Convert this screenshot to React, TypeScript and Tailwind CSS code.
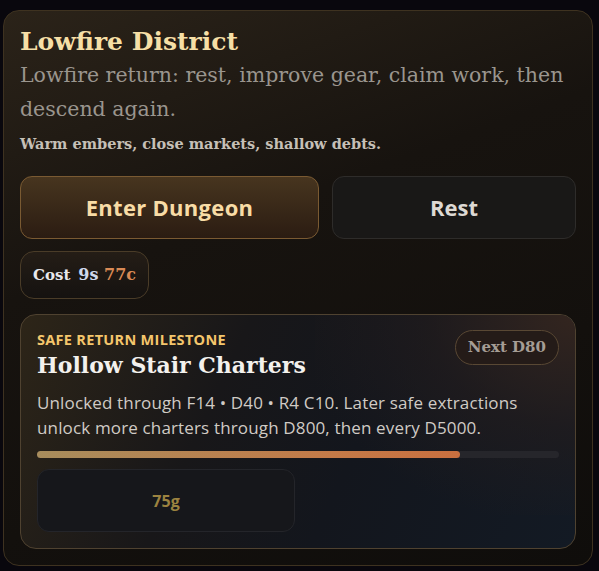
export default function App() {
  return (
    <div className="min-h-[571px] bg-[#09070d] pt-[10px] pl-[3px] pr-[6px] pb-[6px]">
      <div className="rounded-[16px] border border-[#3e3220] bg-[linear-gradient(160deg,#2b2319_0%,#17130f_38%,#0f0d0b_100%)] px-[16px] pt-[16px] pb-[16px]">
        <h1 className="font-['Georgia','DejaVu_Serif',serif] text-[25px] font-bold leading-[30px] text-[#f6dfa6]">
          Lowfire District
        </h1>
        <p className="mt-[1px] font-['Georgia','DejaVu_Serif',serif] text-[20.5px] leading-[34px] text-[#9a958e]">
          Lowfire return: rest, improve gear, claim work, then descend again.
        </p>
        <p className="mt-[8px] font-['Georgia','DejaVu_Serif',serif] text-[14.5px] font-bold leading-[20px] text-[#c6c0b7]">
          Warm embers, close markets, shallow debts.
        </p>

        <div className="mt-[22px] flex gap-[13px]">
          <button className="h-[63px] w-[299px] rounded-[12px] border border-[#7a5a32] bg-[linear-gradient(180deg,#47351f_0%,#2b1c12_100%)] font-['Segoe_UI','Open_Sans',sans-serif] text-[22px] font-bold tracking-[0.3px] text-[#f8dca6]">
            Enter Dungeon
          </button>
          <button className="h-[63px] flex-1 rounded-[12px] border border-[#2e2c2a] bg-[#191817] font-['Segoe_UI','Open_Sans',sans-serif] text-[22px] font-bold text-[#ddd9d3]">
            Rest
          </button>
        </div>

        <div className="mt-[12px] inline-flex h-[48px] items-center gap-[8px] rounded-[14px] border border-[#4a3c28] bg-[linear-gradient(180deg,#241d16_0%,#151210_100%)] px-[12px] font-['Georgia','DejaVu_Serif',serif] font-bold">
          <span className="text-[15px] text-[#e8e8ec]">Cost</span>
          <span className="text-[16px]">
            <span className="text-[#cfd8ec]">9s</span>{' '}
            <span className="text-[#d98a55]">77c</span>
          </span>
        </div>

        <div className="relative mt-[15px] overflow-hidden rounded-[16px] border border-[#4f4230] bg-[linear-gradient(115deg,#2d2518_0%,#181719_35%,#13161d_60%,#131a24_100%)] p-[16px]">
          <div className="pointer-events-none absolute right-0 top-0 h-[200px] w-[260px] bg-[radial-gradient(ellipse_at_top_right,#33251f_0%,rgba(40,30,28,0.5)_40%,rgba(20,22,29,0)_75%)]" />
          <div className="relative">
            <div className="flex items-start justify-between">
              <div>
                <div className="font-['Segoe_UI','Open_Sans',sans-serif] text-[14.5px] font-bold leading-[18px] tracking-[0.3px] text-[#f4c66c]">
                  SAFE RETURN MILESTONE
                </div>
                <div className="mt-[2px] font-['Georgia','DejaVu_Serif',serif] text-[22px] font-bold leading-[28px] text-[#f3f1ed]">
                  Hollow Stair Charters
                </div>
              </div>
              <div className="mt-[-1px] rounded-full border border-[#594834] bg-[#241b18] px-[12px] py-[5px] font-['Georgia','DejaVu_Serif',serif] text-[15px] font-bold text-[#a59d95]">
                Next D80
              </div>
            </div>
            <p className="mt-[11px] font-['Segoe_UI','Open_Sans',sans-serif] text-[17px] leading-[25px] tracking-[0.15px] text-[#d0cbc5]">
              Unlocked through F14 • D40 • R4 C10. Later safe extractions unlock more charters through D800, then every D5000.
            </p>
            <div className="mt-[11px] h-[7px] w-full rounded-full bg-[#26262b]">
              <div
                className="h-full rounded-full bg-[linear-gradient(90deg,#a88d5c_0%,#c47a48_70%,#c96f3f_100%)]"
                style={{ width: '81%' }}
              />
            </div>
            <div className="mt-[11px] flex h-[63px] w-[258px] items-center justify-center rounded-[12px] border border-[#24252a] bg-[#16171b]">
              <span className="font-['Segoe_UI','Open_Sans',sans-serif] text-[16px] font-bold text-[#9c8340]">75g</span>
            </div>
          </div>
        </div>
      </div>
    </div>
  );
}
